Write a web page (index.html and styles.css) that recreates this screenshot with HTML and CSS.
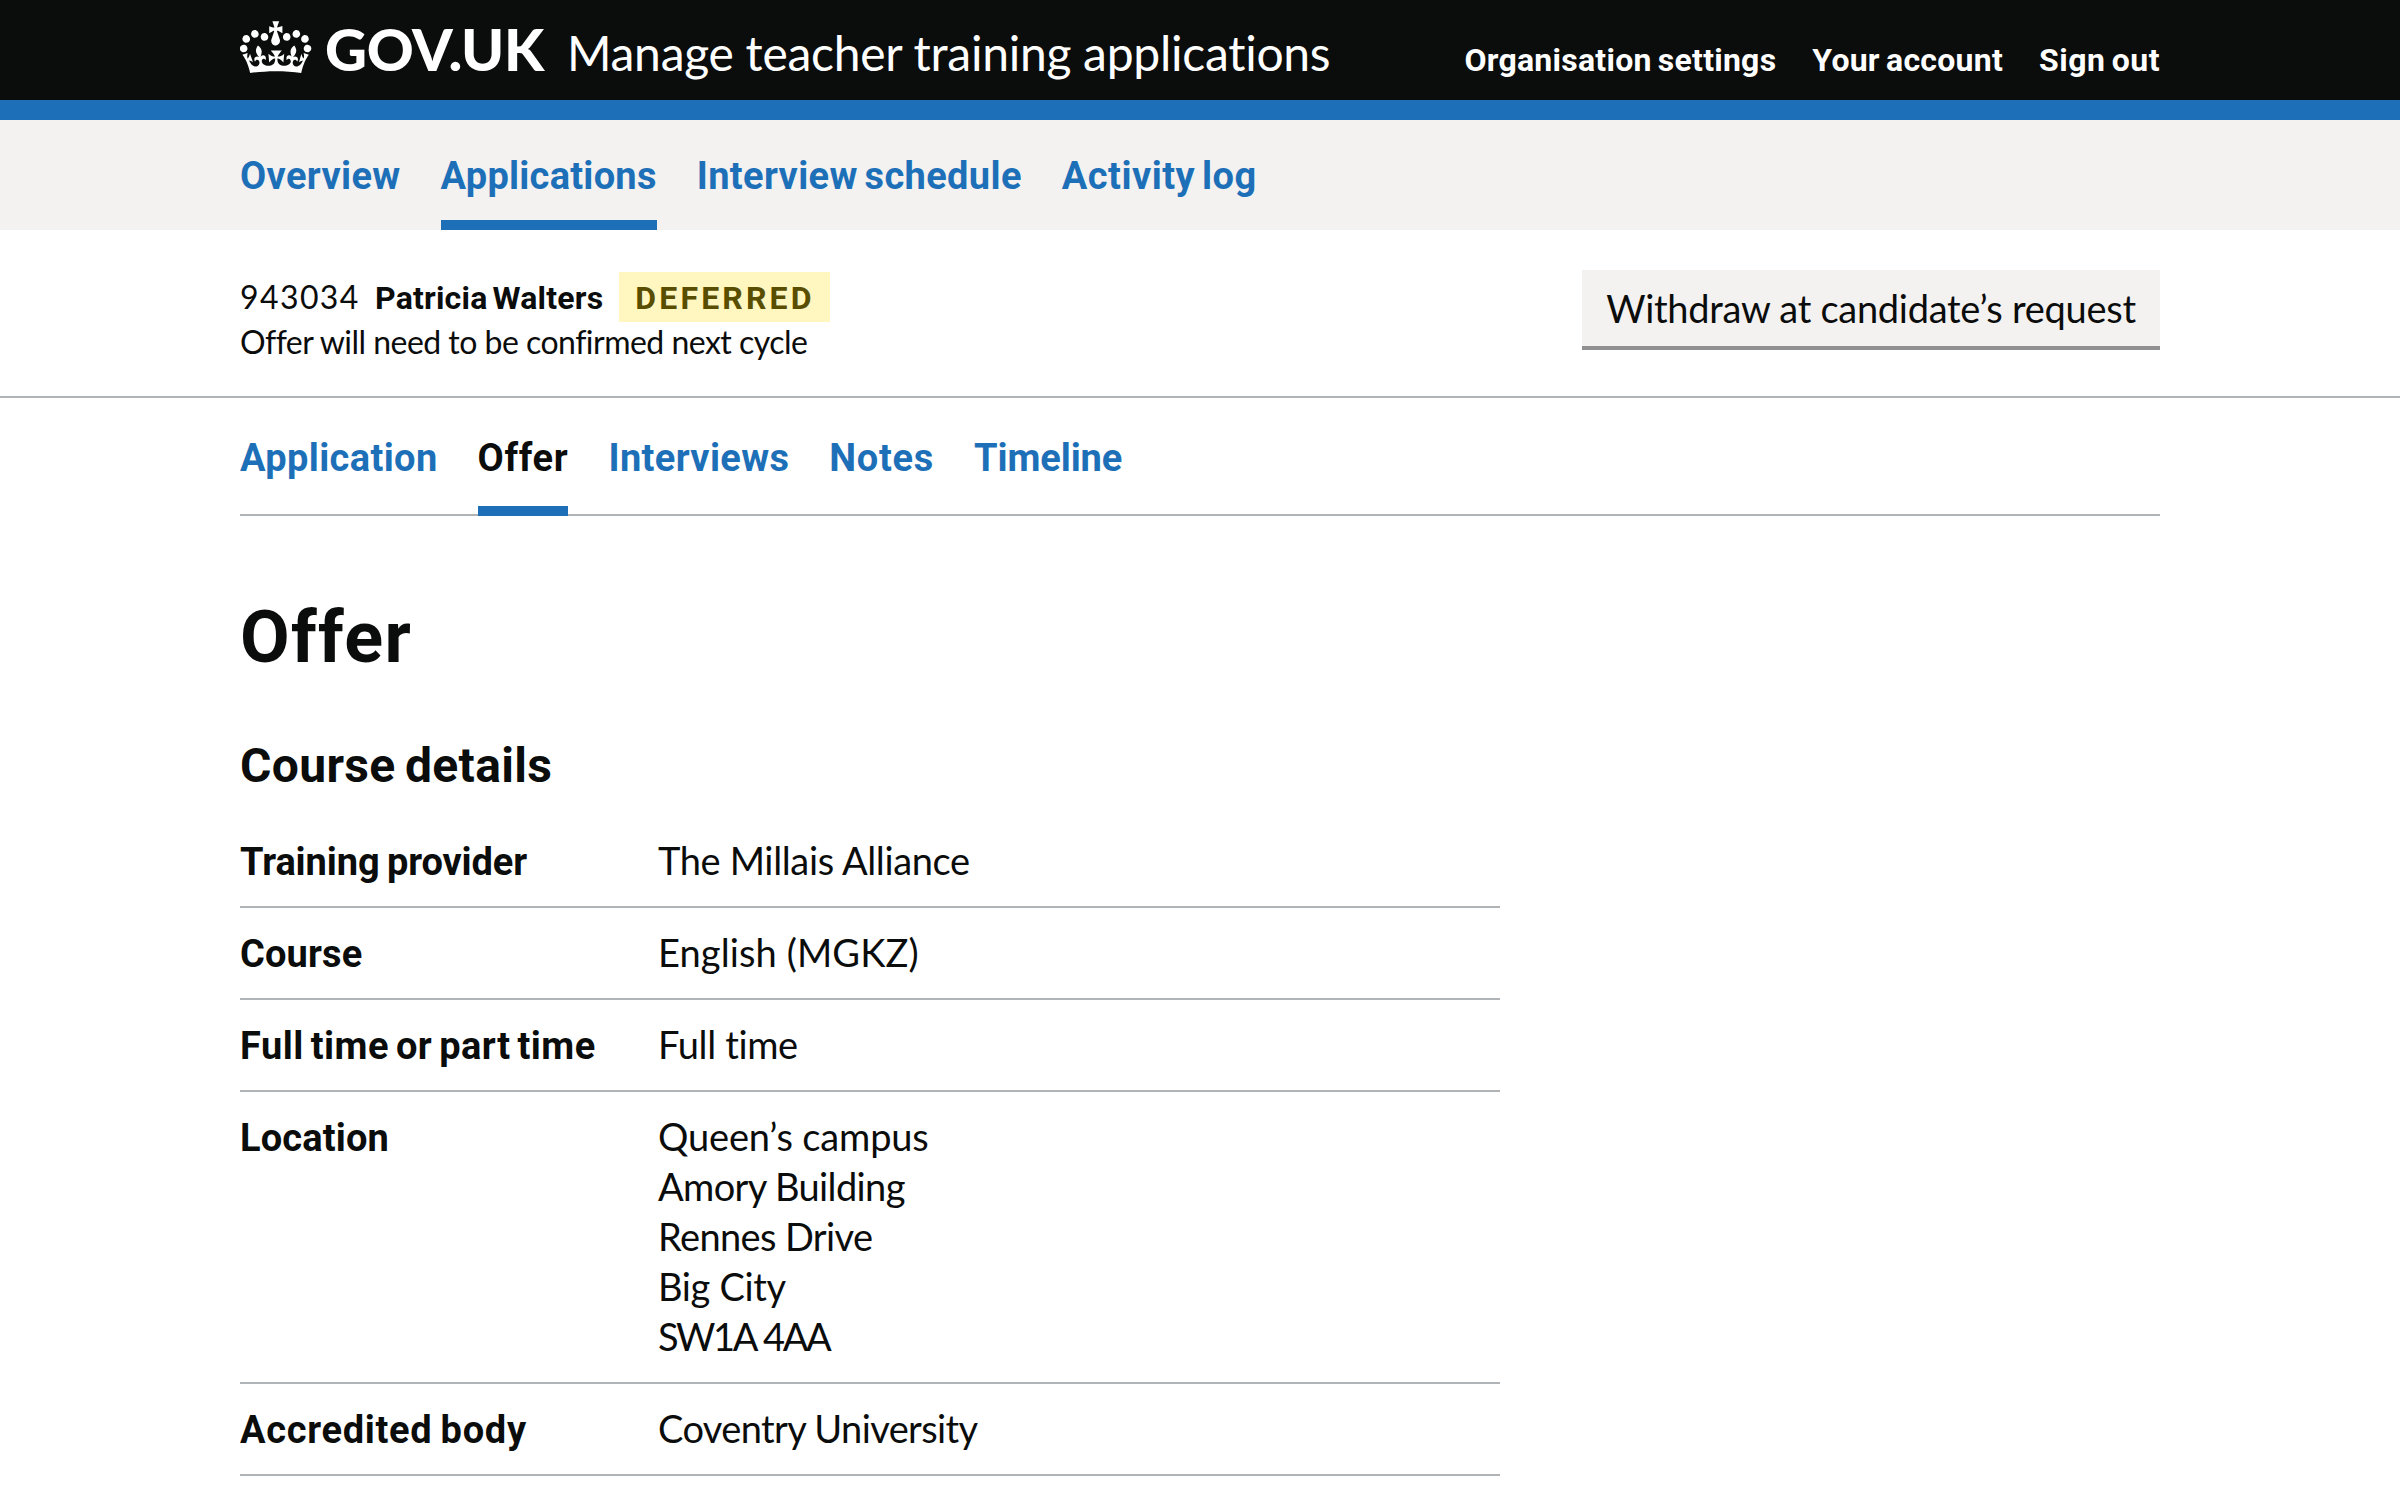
FILE: index.html
```html
<!DOCTYPE html>
<html lang="en">
<head>
<meta charset="utf-8">
<title>Offer - Manage teacher training applications - GOV.UK</title>
<link rel="stylesheet" href="styles.css">
</head>
<body>
<header class="header">
  <div class="container header-inner">
    <a class="logo" href="#">
      <svg class="crown" viewBox="0 0 36 32" width="72" height="64" aria-hidden="true"><path fill="currentColor" d="M6.7 12.2c1 .4 2.1-.1 2.5-1s-.1-2.1-1-2.5c-1-.4-2.1.1-2.5 1-.4 1 0 2.1 1 2.5m-4.3 2.5c1 .4 2.1-.1 2.5-1s-.1-2.1-1-2.5c-1-.4-2.1.1-2.5 1-.5 1 0 2.1 1 2.5m-1.3 4.8c1 .4 2.1-.1 2.5-1 .4-1-.1-2.1-1-2.5-1-.4-2.1.1-2.5 1-.4 1 0 2.1 1 2.5m10.4-5.8c1 .4 2.1-.1 2.5-1s-.1-2.1-1-2.5c-1-.4-2.1.1-2.5 1s0 2.1 1 2.5m17.4-1.5c-1 .4-2.1-.1-2.5-1s.1-2.1 1-2.5c1-.4 2.1.1 2.5 1 .5 1 0 2.1-1 2.5m4.3 2.5c-1 .4-2.1-.1-2.5-1s.1-2.1 1-2.5c1-.4 2.1.1 2.5 1 .5 1 0 2.1-1 2.5m1.3 4.8c-1 .4-2.1-.1-2.5-1-.4-1 .1-2.1 1-2.5 1-.4 2.1.1 2.5 1 .4 1 0 2.1-1 2.5m-10.4-5.8c-1 .4-2.1-.1-2.5-1s.1-2.1 1-2.5c1-.4 2.1.1 2.5 1s0 2.1-1 2.5m-5.3-4.9 2.4 1.3V6.5l-2.4.8c-.1-.1-.1-.2-.2-.2s1-3 1-3h-3.4l1 3c-.1.1-.2.1-.2.2-.1.1-2.4-.7-2.4-.7v3.5L17 8.8c-.1.1 0 .2.1.3l-1.4 4.2c-.1.2-.1.4-.1.7 0 1.1.8 2.1 1.9 2.2h.6C19.2 16 20 15.1 20 14c0-.2 0-.4-.1-.7l-1.4-4.2c.2-.1.3-.2.3-.3m-1 20.3c4.6 0 8.9.3 12.8.9 1.1-4.6 2.4-7.2 3.8-9.1l-2.6-.9c.3 1.3.3 1.9 0 2.8-.4-.4-.8-1.2-1.1-2.4l-1.2 4.2c.8-.5 1.4-.9 2-.9-1.2 2.6-2.7 3.2-3.6 3-1.2-.2-1.7-1.3-1.5-2.2.3-1.3 1.6-1.6 2.2-.1 1.2-2.4-.8-3.1-2.1-2.4 1.9-1.9 2.2-3.6.6-5.7-2.2 1.7-2.2 3.3-1.2 5.6-1.3-1.5-3.3-.7-2.5 1.7.9-1.4 2.1-.5 2 .8-.2 1.2-1.7 2.1-3.7 2-2.8-.2-3-2.2-3-3.6.7-.1 1.9.5 3 2l.4-4.4c-1.1 1.2-2.2 1.4-3.3 1.4.4-1.2 2.1-3.1 2.1-3.1h-5.5s1.8 2 2.1 3.1c-1.1 0-2.2-.3-3.3-1.4l.4 4.4c1.1-1.5 2.3-2.1 3-2-.1 1.6-.2 3.4-3 3.6-1.9.2-3.5-.8-3.7-2-.2-1.3 1-2.2 1.9-.8.7-2.4-1.3-3.1-2.6-1.7 1-2.3 1-4-1.2-5.6-1.6 2.1-1.3 3.8.6 5.7-1.3-.7-3.2 0-2.1 2.4.6-1.5 1.9-1.1 2.2.1.2.9-.4 1.9-1.5 2.2-1 .2-2.5-.5-3.7-3 .7 0 1.3.4 2 .9L5 20.4c-.3 1.2-.7 1.9-1.2 2.4-.3-.8-.2-1.5 0-2.8l-2.6.9C2.7 22.8 4 25.4 5.1 30c3.8-.5 8.2-.9 12.7-.9"/></svg>
      <span class="logo-text">GOV.UK</span>
    </a>
    <a class="service-name" href="#">Manage teacher training applications</a>
    <nav class="account-nav">
      <a class="track-1" href="#">Organisation settings</a>
      <a class="track-1" href="#">Your account</a>
      <a class="track-3" href="#">Sign out</a>
    </nav>
  </div>
</header>

<nav class="primary-nav">
  <div class="container tabs">
    <a class="tab track-2" href="#">Overview</a>
    <a class="tab tab-current track-1" href="#">Applications</a>
    <a class="tab track-2" href="#">Interview schedule</a>
    <a class="tab track-3" href="#">Activity log</a>
  </div>
</nav>

<section class="status">
  <div class="container status-inner">
    <div class="candidate">
      <div class="candidate-line">
        <span class="candidate-id">943034</span>
        <strong class="candidate-name">Patricia Walters</strong>
        <strong class="tag">Deferred</strong>
      </div>
      <p class="hint">Offer will need to be confirmed next cycle</p>
    </div>
    <button class="button" type="button">Withdraw at candidate’s request</button>
  </div>
</section>

<main class="container">
  <nav class="tabs sub-nav">
    <a class="tab track-2" href="#">Application</a>
    <a class="tab tab-current track-4" href="#">Offer</a>
    <a class="tab track-2" href="#">Interviews</a>
    <a class="tab track-4" href="#">Notes</a>
    <a class="tab track-0" href="#">Timeline</a>
  </nav>
  <h1 class="title">Offer</h1>
  <h2 class="subtitle">Course details</h2>
  <dl class="summary">
    <div class="row"><dt class="track-0">Training provider</dt><dd>The Millais Alliance</dd></div>
    <div class="row"><dt>Course</dt><dd class="code">English (MGKZ)</dd></div>
    <div class="row"><dt class="track-3">Full time or part time</dt><dd>Full time</dd></div>
    <div class="row"><dt>Location</dt><dd><span class="campus">Queen’s campus</span><br><span class="tight">Amory Building</span><br><span class="tight">Rennes Drive</span><br>Big City<br><span class="postcode">SW1A 4AA</span></dd></div>
    <div class="row"><dt class="track-4">Accredited body</dt><dd class="tight">Coventry University</dd></div>
  </dl>
</main>
</body>
</html>
```

FILE: styles.css
```css
* { box-sizing: border-box; }

body {
  margin: 0;
  background: #fff;
  color: #0b0c0c;
  font: 400 38px/50px Lato, "Noto Sans", sans-serif;
  font-variant-ligatures: none;
}

a { color: inherit; text-decoration: none; }

.container { width: 1920px; margin: 0 auto; }

.header {
  height: 120px;
  background: #0b0c0c;
  border-bottom: 20px solid #1d70b8;
  color: #fff;
}
.header-inner { display: flex; align-items: baseline; padding-top: 19px; }
.logo { display: flex; align-items: baseline; }
.crown { display: block; align-self: flex-start; margin-top: -6px; }
.logo-text {
  margin-left: 13px;
  font-size: 58px;
  font-weight: 900;
  line-height: 60px;
  letter-spacing: -0.3px;
}
.service-name {
  margin-left: 23px;
  font-size: 48px;
  line-height: 60px;
  letter-spacing: -0.27px;
  white-space: nowrap;
}
.account-nav {
  display: flex;
  gap: 36px;
  margin-left: auto;
  font: 700 32px/40px Roboto, sans-serif;
  word-spacing: -2px;
  white-space: nowrap;
}

.tabs { display: flex; gap: 40px; font-family: Roboto, sans-serif; font-weight: 700; color: #1d70b8; word-spacing: -3px; }
.tab { border-bottom: 10px solid transparent; }
.tab-current { border-color: #1d70b8; }
.track-0 { letter-spacing: -0.1px; }
.track-1 { letter-spacing: 0.25px; }
.track-2 { letter-spacing: 0.36px; }
.track-3 { letter-spacing: 0.48px; }
.track-4 { letter-spacing: 0.7px; }

.primary-nav { background: #f3f2f1; }
.primary-nav .tab { padding: 31px 0 19px; }

.status { height: 168px; border-bottom: 2px solid #b1b4b6; }
.status-inner { display: flex; justify-content: space-between; align-items: flex-start; padding-top: 40px; }
.candidate { padding-top: 2px; font-size: 32px; line-height: 44px; }
.candidate-line { display: flex; align-items: baseline; }
.candidate-id { width: 135px; letter-spacing: 1.4px; }
.candidate-name { font-family: Roboto, sans-serif; letter-spacing: 0.2px; word-spacing: -3px; }
.tag {
  margin-left: 16px;
  padding: 10px 15px 8px 16px;
  background: #fff7bf;
  color: #594d00;
  font: 700 32px/32px Roboto, sans-serif;
  letter-spacing: 3.15px;
  text-transform: uppercase;
}
.hint { margin: -2px 0 0; letter-spacing: -0.52px; }
.button {
  width: 578px;
  height: 76px;
  padding: 0;
  border: 0;
  background: #f3f2f1;
  box-shadow: 0 4px 0 #929191;
  color: inherit;
  font: inherit;
  line-height: 76px;
  letter-spacing: -0.28px;
}

.sub-nav { border-bottom: 2px solid #b1b4b6; }
.sub-nav .tab { padding: 35px 0 23px; margin-bottom: -2px; }
.sub-nav .tab-current { color: #0b0c0c; }

.title { margin: 82px 0 0; font: 700 72px/80px Roboto, sans-serif; letter-spacing: 1.3px; }
.subtitle { margin: 58px 0 20px; font: 700 48px/60px Roboto, sans-serif; letter-spacing: 0.35px; word-spacing: -3px; }

.summary { width: 1260px; margin: 0; }
.row {
  display: grid;
  grid-template-columns: 418px 1fr;
  padding: 21px 0 19px;
  border-bottom: 2px solid #b1b4b6;
}
dt { font-family: Roboto, sans-serif; font-weight: 700; letter-spacing: 0.15px; word-spacing: -2px; }
dt.track-3 { word-spacing: -3px; }
dd { margin: -2px 0 2px; letter-spacing: -0.35px; }
.code { letter-spacing: 0.1px; }
.campus { letter-spacing: -0.15px; }
.tight { letter-spacing: -0.62px; }
.postcode { letter-spacing: -2.4px; word-spacing: 1px; }
```
